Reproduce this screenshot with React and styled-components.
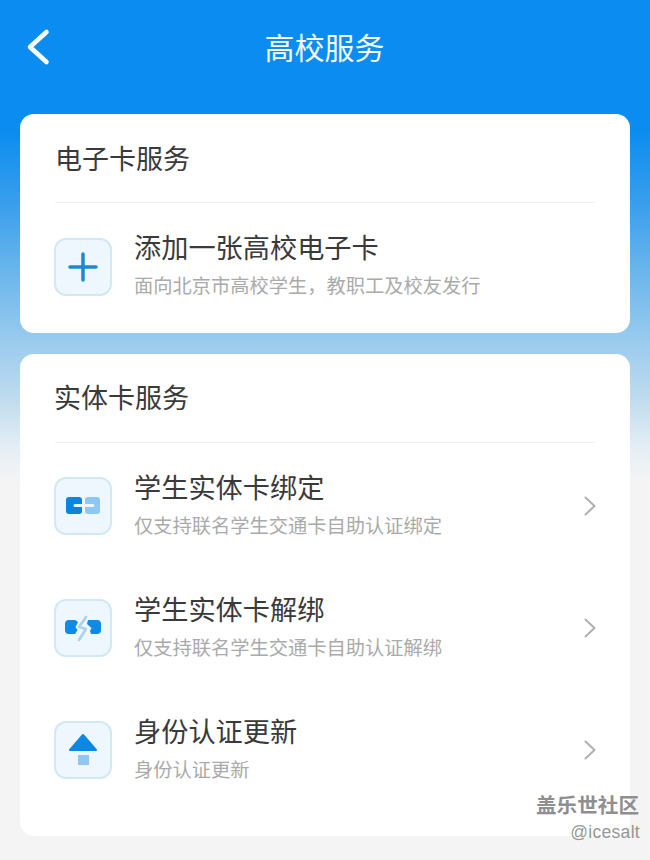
import React from 'react';
import styled, { createGlobalStyle } from 'styled-components';

const Global = createGlobalStyle`
  html, body { margin: 0; padding: 0; }
  body { font-family: "Noto Sans CJK SC", "Noto Sans", sans-serif; }
`;
const Page = styled.div`
  position: relative;
  width: 650px;
  height: 860px;
  overflow: hidden;
  background: linear-gradient(180deg, #0a8cf0 0px, #0a8cf0 130px, #3a9fec 205px, #62b2ec 260px, #8fc6ee 325px, #c0dcee 400px, #e6eff5 450px, #f4f4f4 482px, #f4f4f4 860px);
`;
const Header = styled.header`
  display: flex;
  align-items: center;
  justify-content: center;
  position: relative;
  height: 96px;
  margin-bottom: 18px;
`;
const Back = styled.svg`
  position: absolute;
  left: 26px;
  top: 28px;
  width: 24px;
  height: 38px;
`;
const Title = styled.h1`
  margin: -4px 0 0 -1px;
  font-size: 30px;
  font-weight: 400;
  line-height: 40px;
  color: #f4faff;
`;
const Card = styled.section`
  margin: 0 20px 21px;
  padding: 0 35px 0;
  background: #fff;
  border-radius: 14px;
  height: ${p => p.$h}px;
  box-sizing: border-box;
`;
const CardTitle = styled.h2`
  margin: 0;
  height: 89px;
  padding-bottom: ${p => p.$pb || 2}px;
  display: flex;
  align-items: center;
  font-size: 27px;
  font-weight: 400;
  color: #3a3a3a;
  border-bottom: 1px solid #f0f0f0;
  box-sizing: border-box;
`;
const CardTitleText = styled.span`
  margin-left: ${p => p.$ml || 0}px;
`;
const Row = styled.div`
  display: flex;
  align-items: center;
  box-sizing: border-box;
  height: ${p => p.$h || 122}px;
  padding-top: ${p => p.$pt ?? 3}px;
`;
const IconBox = styled.div`
  width: 58px;
  height: 58px;
  flex: none;
  box-sizing: border-box;
  margin-left: -1px;
  border: 2px solid #d3e8f5;
  border-radius: 12px;
  background: #eef7fd;
  display: flex;
  align-items: center;
  justify-content: center;
`;
const Text = styled.div`
  flex: 1;
  margin-left: 22px;
  min-width: 0;
  padding-bottom: ${p => p.$pb ?? 7}px;
`;
const RowTitle = styled.div`
  font-size: 27.2px;
  line-height: 40px;
  color: #3a3a3a;
`;
const RowSub = styled.div`
  font-size: 19.25px;
  line-height: 28px;
  margin-top: 5px;
  color: #aaaaaa;
`;
const Chevron = styled.svg`
  width: 14px;
  height: 22px;
  flex: none;
  margin-right: -2px;
`;
const Watermark = styled.div`
  position: absolute;
  right: 11px;
  top: 792px;
  display: flex;
  flex-direction: column;
  align-items: flex-end;
`;
const WmTitle = styled.div`
  font-size: 20.6px;
  line-height: 24px;
  font-weight: 700;
  color: #8f8f8f;
`;
const WmUser = styled.div`
  font-family: "Liberation Sans", sans-serif;
  font-size: 17.5px;
  letter-spacing: 0.3px;
  line-height: 24px;
  margin: 4px -1px 0 0;
  color: #969696;
`;

const ChevronIcon = () => (
  <Chevron viewBox="0 0 14 22"><path d="M2.5 2.5 L11.5 11 L2.5 19.5" fill="none" stroke="#b0b0b0" strokeWidth="2" strokeLinecap="round" strokeLinejoin="round" /></Chevron>
);
const Plus = () => (
  <svg width="30" height="30" viewBox="0 0 30 30"><path d="M15 2 V28 M2 15 H28" stroke="#1a8ad4" strokeWidth="3.5" strokeLinecap="round" /></svg>
);
const Link = () => (
  <svg width="36" height="19" viewBox="0 0 36 19">
    <rect x="1" y="1" width="16" height="17" rx="3" fill="#0a84dc" />
    <rect x="20" y="1" width="15" height="17" rx="3" fill="#8cc8f3" />
    <path d="M10 9.5 H28" stroke="#eef7fd" strokeWidth="3" strokeLinecap="round" />
  </svg>
);
const Unlink = () => (
  <svg width="38" height="28" viewBox="0 0 38 28">
    <path d="M5 6 H11 L14 8 L11.5 13 L13.5 16 L11 20 H5 A4 4 0 0 1 1 16 V10 A4 4 0 0 1 5 6 Z" fill="#0f8ae6" />
    <path d="M24 6 H33 A4 4 0 0 1 37 10 V16 A4 4 0 0 1 33 20 H27 L26 17 L27.5 14 L23 10 Z" fill="#0f8ae6" />
    <path d="M22 3 L15 13 L22 15 L15 26" fill="none" stroke="#a9d3ee" strokeWidth="2.6" strokeLinejoin="round" strokeLinecap="round" />
  </svg>
);
const Up = () => (
  <svg width="30" height="34" viewBox="0 0 30 34">
    <path d="M15 2 L28 17 H2 Z" fill="#0c88e4" stroke="#0c88e4" strokeWidth="2" strokeLinejoin="round" />
    <rect x="10" y="22" width="11" height="10" fill="#8fc6f2" />
  </svg>
);

export default function App() {
  return (
    <Page>
      <Global />
      <Header>
        <Back viewBox="0 0 24 38"><path d="M20.5 4 L4 19 L20.5 34" fill="none" stroke="#fff" strokeWidth="4.6" strokeLinecap="round" strokeLinejoin="round" /></Back>
        <Title>高校服务</Title>
      </Header>
      <Card $h={219}>
        <CardTitle $pb={2}>
          <CardTitleText>电子卡服务</CardTitleText>
        </CardTitle>
        <Row $h={128} $pt={0}>
          <IconBox><Plus /></IconBox>
          <Text $pb={9}>
            <RowTitle>添加一张高校电子卡</RowTitle>
            <RowSub>面向北京市高校学生，教职工及校友发行</RowSub>
          </Text>
        </Row>
      </Card>
      <Card $h={482}>
        <CardTitle $pb={4}>
          <CardTitleText $ml={-1}>实体卡服务</CardTitleText>
        </CardTitle>
        <Row>
          <IconBox><Link /></IconBox>
          <Text>
            <RowTitle>学生实体卡绑定</RowTitle>
            <RowSub>仅支持联名学生交通卡自助认证绑定</RowSub>
          </Text>
          <ChevronIcon />
        </Row>
        <Row>
          <IconBox><Unlink /></IconBox>
          <Text>
            <RowTitle>学生实体卡解绑</RowTitle>
            <RowSub>仅支持联名学生交通卡自助认证解绑</RowSub>
          </Text>
          <ChevronIcon />
        </Row>
        <Row>
          <IconBox><Up /></IconBox>
          <Text>
            <RowTitle>身份认证更新</RowTitle>
            <RowSub>身份认证更新</RowSub>
          </Text>
          <ChevronIcon />
        </Row>
      </Card>
      <Watermark>
        <WmTitle>盖乐世社区</WmTitle>
        <WmUser>@icesalt</WmUser>
      </Watermark>
    </Page>
  );
}
